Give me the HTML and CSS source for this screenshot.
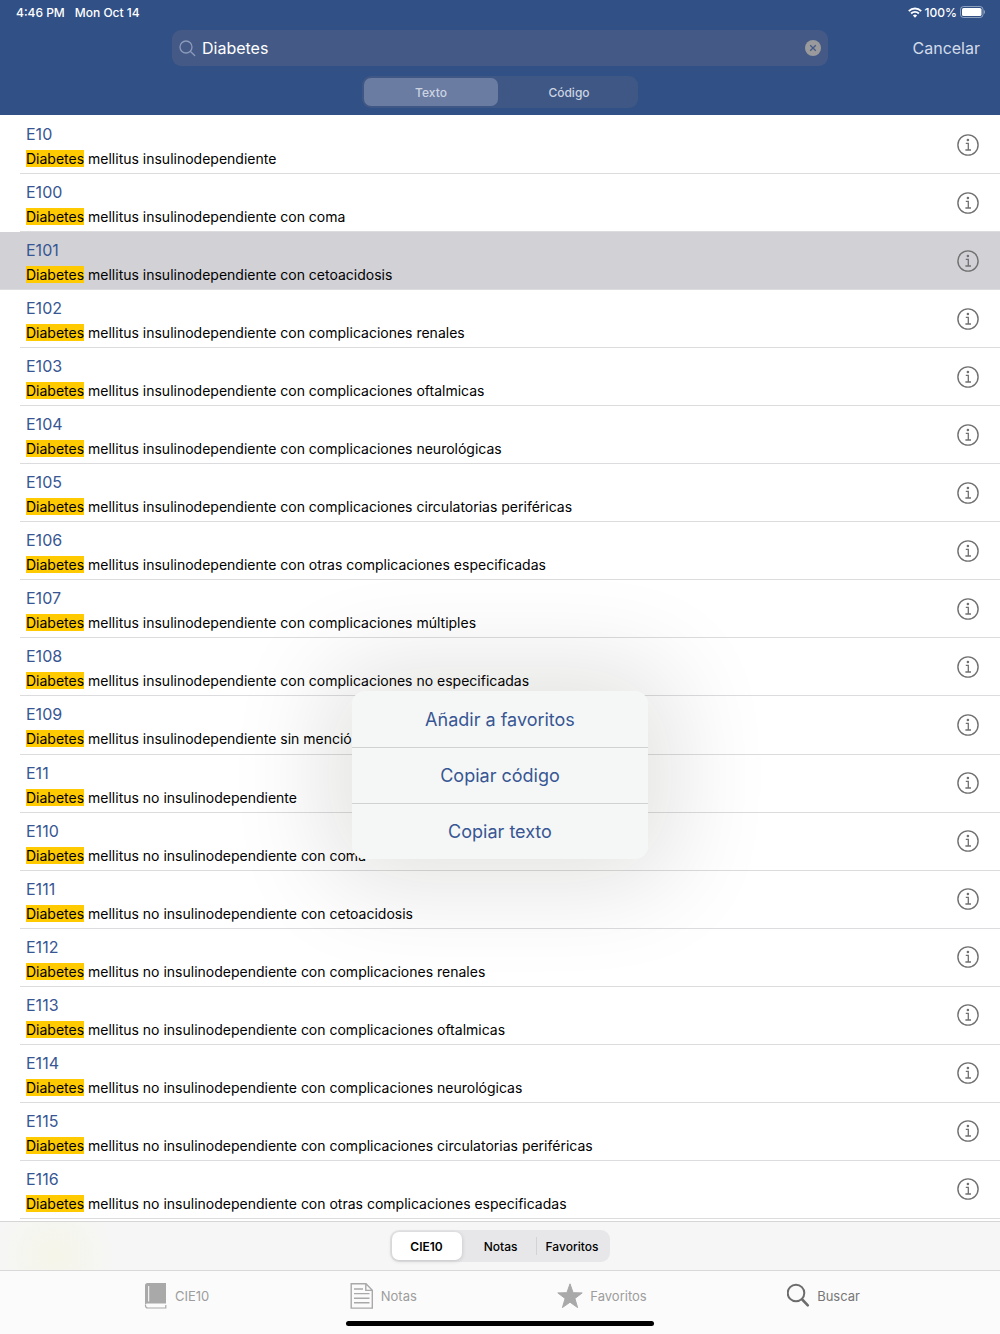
FILE: index.html
```html
<!DOCTYPE html>
<html lang="es">
<head>
    <meta charset="UTF-8">
    <meta name="viewport" content="width=device-width, initial-scale=1.0">
    <title>CIE10 - Buscar</title>
    <link rel="stylesheet" href="styles.css">
</head>
<body>
    <!-- icono de informacion, se repite en cada fila -->
    <svg class="sprite" aria-hidden="true">
        <symbol id="info" viewBox="0 0 22 22">
            <circle cx="11" cy="11" r="10.1" fill="none" stroke="currentColor" stroke-width="1.4"/>
            <circle cx="10.9" cy="6" r="1.3" fill="currentColor"/>
            <path d="M8.8 9.4h2.5v6.5M8.4 16h5.6" fill="none" stroke="currentColor" stroke-width="1.3"/>
        </symbol>
    </svg>

    <div class="app">
        <header class="header">
            <div class="status">
                <span>4:46 PM</span>
                <span>Mon Oct 14</span>
                <div class="status-right">
                    <svg width="14" height="11" viewBox="0 0 14 11" fill="none" stroke="#fff" stroke-width="1.9">
                        <path d="M.8 4.1a8.8 8.8 0 0 1 12.4 0M3.1 6.5a5.5 5.5 0 0 1 7.8 0"/>
                        <path d="M7 10.8L4.9 8.6a3 3 0 0 1 4.2 0z" fill="#fff" stroke="none"/>
                    </svg>
                    <span>100%</span>
                    <svg width="25" height="12" viewBox="0 0 25 12">
                        <rect x=".5" y=".5" width="22.5" height="11" rx="3" fill="none" stroke="#fff" stroke-opacity=".45"/>
                        <rect x="2" y="2" width="19.5" height="8" rx="1.6" fill="#fff"/>
                        <path d="M23.9 4v4c1.400-.7 1.400-3.300 0-4z" fill="#fff" fill-opacity=".5"/>
                    </svg>
                </div>
            </div>

            <form class="search">
                <div class="search-box">
                    <svg width="17" height="17" viewBox="0 0 17 17" fill="none" stroke="#8c9bbb" stroke-width="1.3" stroke-linecap="round">
                        <circle cx="7" cy="7" r="6"/>
                        <path d="M11.500 11.500L15.700 15.500"/>
                    </svg>
                    <input type="text" value="Diabetes" aria-label="Buscar diagnóstico">
                    <button type="button" class="clear" aria-label="Borrar">
                        <svg width="16" height="16" viewBox="0 0 16 16">
                            <circle cx="8" cy="8" r="8" fill="#9a9a9d"/>
                            <path d="M5.200 5.200l5.600 5.600M10.800 5.200l-5.600 5.600" stroke="#445985" stroke-width="1.3"/>
                        </svg>
                    </button>
                </div>
                <button type="button" class="cancel">Cancelar</button>
            </form>

            <div class="scope">
                <button type="button" class="active">Texto</button>
                <button type="button">Código</button>
            </div>
        </header>

        <ul class="list">
            <li>
                <div><h2>E10</h2><p><mark>Diabetes</mark> mellitus insulinodependiente</p></div>
                <button type="button" aria-label="Información E10"><svg><use href="#info"/></svg></button>
            </li>
            <li>
                <div><h2>E100</h2><p><mark>Diabetes</mark> mellitus insulinodependiente con coma</p></div>
                <button type="button" aria-label="Información E100"><svg><use href="#info"/></svg></button>
            </li>
            <li class="selected">
                <div><h2>E101</h2><p><mark>Diabetes</mark> mellitus insulinodependiente con cetoacidosis</p></div>
                <button type="button" aria-label="Información E101"><svg><use href="#info"/></svg></button>
            </li>
            <li>
                <div><h2>E102</h2><p><mark>Diabetes</mark> mellitus insulinodependiente con complicaciones renales</p></div>
                <button type="button" aria-label="Información E102"><svg><use href="#info"/></svg></button>
            </li>
            <li>
                <div><h2>E103</h2><p><mark>Diabetes</mark> mellitus insulinodependiente con complicaciones oftalmicas</p></div>
                <button type="button" aria-label="Información E103"><svg><use href="#info"/></svg></button>
            </li>
            <li>
                <div><h2>E104</h2><p><mark>Diabetes</mark> mellitus insulinodependiente con complicaciones neurológicas</p></div>
                <button type="button" aria-label="Información E104"><svg><use href="#info"/></svg></button>
            </li>
            <li>
                <div><h2>E105</h2><p><mark>Diabetes</mark> mellitus insulinodependiente con complicaciones circulatorias periféricas</p></div>
                <button type="button" aria-label="Información E105"><svg><use href="#info"/></svg></button>
            </li>
            <li>
                <div><h2>E106</h2><p><mark>Diabetes</mark> mellitus insulinodependiente con otras complicaciones especificadas</p></div>
                <button type="button" aria-label="Información E106"><svg><use href="#info"/></svg></button>
            </li>
            <li>
                <div><h2>E107</h2><p><mark>Diabetes</mark> mellitus insulinodependiente con complicaciones múltiples</p></div>
                <button type="button" aria-label="Información E107"><svg><use href="#info"/></svg></button>
            </li>
            <li>
                <div><h2>E108</h2><p><mark>Diabetes</mark> mellitus insulinodependiente con complicaciones no especificadas</p></div>
                <button type="button" aria-label="Información E108"><svg><use href="#info"/></svg></button>
            </li>
            <li>
                <div><h2>E109</h2><p><mark>Diabetes</mark> mellitus insulinodependiente sin mención de complicación</p></div>
                <button type="button" aria-label="Información E109"><svg><use href="#info"/></svg></button>
            </li>
            <li>
                <div><h2>E11</h2><p><mark>Diabetes</mark> mellitus no insulinodependiente</p></div>
                <button type="button" aria-label="Información E11"><svg><use href="#info"/></svg></button>
            </li>
            <li>
                <div><h2>E110</h2><p><mark>Diabetes</mark> mellitus no insulinodependiente con coma</p></div>
                <button type="button" aria-label="Información E110"><svg><use href="#info"/></svg></button>
            </li>
            <li>
                <div><h2>E111</h2><p><mark>Diabetes</mark> mellitus no insulinodependiente con cetoacidosis</p></div>
                <button type="button" aria-label="Información E111"><svg><use href="#info"/></svg></button>
            </li>
            <li>
                <div><h2>E112</h2><p><mark>Diabetes</mark> mellitus no insulinodependiente con complicaciones renales</p></div>
                <button type="button" aria-label="Información E112"><svg><use href="#info"/></svg></button>
            </li>
            <li>
                <div><h2>E113</h2><p><mark>Diabetes</mark> mellitus no insulinodependiente con complicaciones oftalmicas</p></div>
                <button type="button" aria-label="Información E113"><svg><use href="#info"/></svg></button>
            </li>
            <li>
                <div><h2>E114</h2><p><mark>Diabetes</mark> mellitus no insulinodependiente con complicaciones neurológicas</p></div>
                <button type="button" aria-label="Información E114"><svg><use href="#info"/></svg></button>
            </li>
            <li>
                <div><h2>E115</h2><p><mark>Diabetes</mark> mellitus no insulinodependiente con complicaciones circulatorias periféricas</p></div>
                <button type="button" aria-label="Información E115"><svg><use href="#info"/></svg></button>
            </li>
            <li>
                <div><h2>E116</h2><p><mark>Diabetes</mark> mellitus no insulinodependiente con otras complicaciones especificadas</p></div>
                <button type="button" aria-label="Información E116"><svg><use href="#info"/></svg></button>
            </li>
        </ul>

        <div class="toolbar">
            <div class="segments">
                <button type="button" class="active">CIE10</button>
                <button type="button">Notas</button>
                <button type="button" class="divided">Favoritos</button>
            </div>
        </div>

        <nav class="tabs">
            <a href="#cie10">
                <svg width="24" height="26" viewBox="0 0 24 26">
                    <path d="M3.500 0H22v20.500H3.500A3.500 3.500 0 0 0 1 21.500V2.500A2.500 2.500 0 0 1 3.500 0z" fill="#a9a9a9"/>
                    <path d="M4.700 3v15.500" stroke="#fff" stroke-width="1"/>
                    <path d="M1.500 21.500v1a2.500 2.500 0 0 0 2.500 2.500h17.800v-3" fill="none" stroke="#a9a9a9" stroke-width="1.200"/>
                </svg>
                CIE10
            </a>
            <a href="#notas">
                <svg width="24" height="26" viewBox="0 0 24 26" fill="none" stroke="#a9a9a9" stroke-width="1.400">
                    <path d="M1.200.8h14.800l6.300 6.400v17.900H1.200zM15.800.8v6.600h6.500"/>
                    <path d="M4 6h9M4 10.600h15.500M4 15.200h15.500M4 19.800h15.500"/>
                </svg>
                Notas
            </a>
            <a href="#favoritos">
                <svg width="26" height="26" viewBox="0 0 26 26">
                    <path d="M13 .8l3.100 8.900 9.100.2-7.300 5.600 2.700 9.100L13 19.200l-7.600 5.400 2.700-9.100L.8 9.900l9.100-.2z" fill="#a9a9a9" stroke="#a9a9a9" stroke-linejoin="round"/>
                </svg>
                Favoritos
            </a>
            <a href="#buscar" class="current">
                <svg width="23" height="26" viewBox="1 1 23 26" fill="none" stroke="#6c6c6c" stroke-linecap="round">
                    <circle cx="10" cy="11" r="8.300" stroke-width="2"/>
                    <path d="M16.200 17.500l5.600 5.800" stroke-width="2.600"/>
                </svg>
                Buscar
            </a>
            <span class="home-bar"></span>
        </nav>

        <div class="menu" role="menu">
            <button type="button" role="menuitem">Añadir a favoritos</button>
            <button type="button" role="menuitem">Copiar código</button>
            <button type="button" role="menuitem">Copiar texto</button>
        </div>
    </div>
</body>
</html>
```

FILE: styles.css
```css
* {
    box-sizing: border-box;
}

body {
    margin: 0;
    font-family: Inter, "Liberation Sans", sans-serif;
    background-color: #fff;
    color: #000;
}

button {
    padding: 0;
    border: none;
    background: none;
    font-family: inherit;
    cursor: pointer;
}

svg {
    display: block;
    flex: none;
}

.sprite {
    position: absolute;
    width: 0;
    height: 0;
}

.app {
    position: relative;
    display: flex;
    flex-direction: column;
    min-height: 100vh;
}

/* Cabecera */
.header {
    background-color: #315086;
    color: #fff;
    padding-bottom: 7px;
}

.status {
    display: flex;
    align-items: center;
    gap: 10px;
    height: 24px;
    padding: 0 15px 0 16px;
    font-size: 12px;
    font-weight: 500;
}

.status-right {
    display: flex;
    align-items: center;
    gap: 3px;
    margin-left: auto;
}

.search {
    display: grid;
    grid-template-columns: 1fr 656px 1fr;
    align-items: center;
    margin: 6px 0 10px;
}

.search-box {
    grid-column: 2;
    display: flex;
    align-items: center;
    gap: 6px;
    height: 36px;
    padding: 0 7px;
    border-radius: 9px;
    background-color: #445985;
}

.search-box input {
    flex: 1;
    min-width: 0;
    padding: 0;
    border: none;
    outline: none;
    background: none;
    color: #fff;
    font-family: inherit;
    font-size: 16px;
}

.cancel {
    justify-self: end;
    margin-right: 20px;
    color: #d3dbe9;
    font-size: 16px;
}

.scope {
    display: flex;
    gap: 4px;
    width: 276px;
    height: 32px;
    margin: 0 auto;
    padding: 2px;
    border-radius: 9px;
    background-color: #3f5784;
}

.scope button {
    flex: 1;
    border-radius: 7px;
    color: #ccd4e2;
    font-size: 12px;
    font-weight: 500;
}

.scope .active {
    background-color: #6b7ca3;
}

/* Lista de resultados */
.list {
    flex: 1;
    display: flex;
    flex-direction: column;
    margin: 0;
    padding: 1px 0 2px;
    list-style: none;
}

.list li {
    flex: 1;
    display: flex;
    align-items: center;
    justify-content: space-between;
    margin-left: 20px;
    padding: 0 21px 0 6px;
    border-bottom: 1px solid #dcdcde;
}

.list .selected {
    margin-left: 0;
    padding-left: 26px;
    background-color: #d1d1d6;
}

.list h2 {
    margin: 3px 0 6px;
    color: #375693;
    font-size: 16px;
    font-weight: 400;
    line-height: 20px;
}

.list p {
    margin: 0;
    font-size: 14px;
    line-height: 18px;
}

.list mark {
    background-color: #ffcb00;
    color: inherit;
}

.list button {
    color: #707070;
}

.list button svg {
    width: 22px;
    height: 22px;
}

/* Barra inferior */
.toolbar {
    display: flex;
    justify-content: center;
    align-items: center;
    height: 49px;
    border-top: 1px solid #d6d6d6;
    background: radial-gradient(circle at 55px 34px, #f5f5e9, #f6f6f6 60px);
}

.segments {
    display: flex;
    height: 32px;
    padding: 2px;
    border-radius: 9px;
    background-color: #e7e7e9;
}

.segments button {
    min-width: 70px;
    padding: 0 10px;
    border-radius: 7px;
    font-size: 12px;
    font-weight: 500;
}

.segments .active {
    margin-right: 4px;
    background-color: #fff;
    box-shadow: 0 1px 4px rgba(0, 0, 0, 0.16);
    font-weight: 600;
}

.segments .divided {
    background: linear-gradient(#d3d3d6, #d3d3d6) left center / 1px 18px no-repeat;
    border-radius: 0;
}

.tabs {
    position: relative;
    display: flex;
    justify-content: space-between;
    align-items: center;
    height: 64px;
    padding: 0 140px 14px 144px;
    border-top: 1px solid #d9d9d9;
    background-color: #fbfbfb;
}

.tabs a {
    display: flex;
    align-items: center;
    gap: 7px;
    color: #9d9d9d;
    font-size: 13px;
    text-decoration: none;
}

.tabs .current {
    color: #777;
}

.home-bar {
    position: absolute;
    left: 50%;
    bottom: 8px;
    width: 308px;
    height: 5px;
    border-radius: 3px;
    background-color: #000;
    transform: translateX(-50%);
}

/* Menu contextual */
.menu {
    position: absolute;
    top: 691px;
    left: 50%;
    width: 296px;
    overflow: hidden;
    border-radius: 13px;
    background-color: #f5f7f7;
    box-shadow: 0 0 100px 24px rgba(20, 20, 0, 0.12);
    transform: translateX(-50%);
}

.menu button {
    display: block;
    width: 100%;
    height: 56px;
    color: #375693;
    font-size: 18px;
}

.menu button + button {
    border-top: 1px solid #cfd1d2;
}
```
